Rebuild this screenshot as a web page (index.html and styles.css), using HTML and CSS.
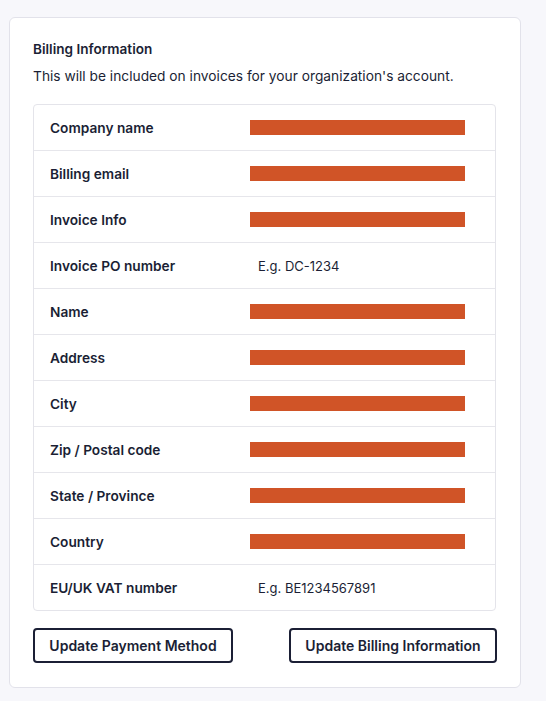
FILE: index.html
```html
<!DOCTYPE html>
<html>
<head>
<meta charset="utf-8">
<link rel="stylesheet" href="styles.css">
</head>
<body>
<div class="card">
  <div class="title">Billing Information</div>
  <div class="subtitle">This will be included on invoices for your organization's account.</div>
  <div class="table">
    <div class="row"><div class="label">Company name</div><div class="value"><span class="redact"></span></div></div>
    <div class="row"><div class="label">Billing email</div><div class="value"><span class="redact"></span></div></div>
    <div class="row"><div class="label">Invoice Info</div><div class="value"><span class="redact"></span></div></div>
    <div class="row"><div class="label">Invoice PO number</div><div class="value"><span class="placeholder">E.g. DC-1234</span></div></div>
    <div class="row"><div class="label">Name</div><div class="value"><span class="redact"></span></div></div>
    <div class="row"><div class="label">Address</div><div class="value"><span class="redact"></span></div></div>
    <div class="row"><div class="label">City</div><div class="value"><span class="redact"></span></div></div>
    <div class="row"><div class="label">Zip / Postal code</div><div class="value"><span class="redact"></span></div></div>
    <div class="row"><div class="label">State / Province</div><div class="value"><span class="redact"></span></div></div>
    <div class="row"><div class="label">Country</div><div class="value"><span class="redact"></span></div></div>
    <div class="row last"><div class="label">EU/UK VAT number</div><div class="value"><span class="placeholder">E.g. BE1234567891</span></div></div>
  </div>
  <div class="actions">
    <button class="btn btn-left">Update Payment Method</button>
    <button class="btn btn-right">Update Billing Information</button>
  </div>
</div>
</body>
</html>
```
FILE: styles.css
```css
html, body {
  margin: 0;
  padding: 0;
  background: #f7f7fb;
}
body {
  font-family: "Inter", "Lato", sans-serif;
  color: #1b1f35;
  padding: 17px 0 0 9px;
}
.card {
  width: 464px;
  background: #ffffff;
  border: 1px solid #e2e2ea;
  border-radius: 6px;
  padding: 21px 23px 24px 23px;
}
.title {
  font-size: 13.6px;
  font-weight: 600;
  line-height: 20px;
}
.subtitle {
  margin-top: 7px;
  font-size: 13.75px;
  line-height: 20px;
}
.table {
  margin-top: 18px;
  border: 1px solid #e4e4ea;
  border-radius: 4px;
  width: 461px;
}
.row {
  display: flex;
  align-items: center;
  height: 45px;
  border-bottom: 1px solid #e6e6eb;
}
.row.last {
  border-bottom: none;
}
.label {
  width: 200px;
  padding-left: 16px;
  font-size: 13.7px;
  font-weight: 600;
}
.value {
  display: flex;
  align-items: center;
}
.redact {
  display: block;
  width: 215px;
  height: 15px;
  background: #d05427;
}
.placeholder {
  padding-left: 8px;
  font-size: 13px;
}
.actions {
  margin-top: 17px;
  display: flex;
  justify-content: space-between;
}
.btn {
  font-family: inherit;
  background: #ffffff;
  color: #1b1f35;
  border: 2px solid #1b1f35;
  border-radius: 4px;
  height: 35px;
  font-size: 14px;
  font-weight: 600;
  padding: 0;
}
.btn-left {
  width: 200px;
}
.btn-right {
  width: 208px;
}
```
